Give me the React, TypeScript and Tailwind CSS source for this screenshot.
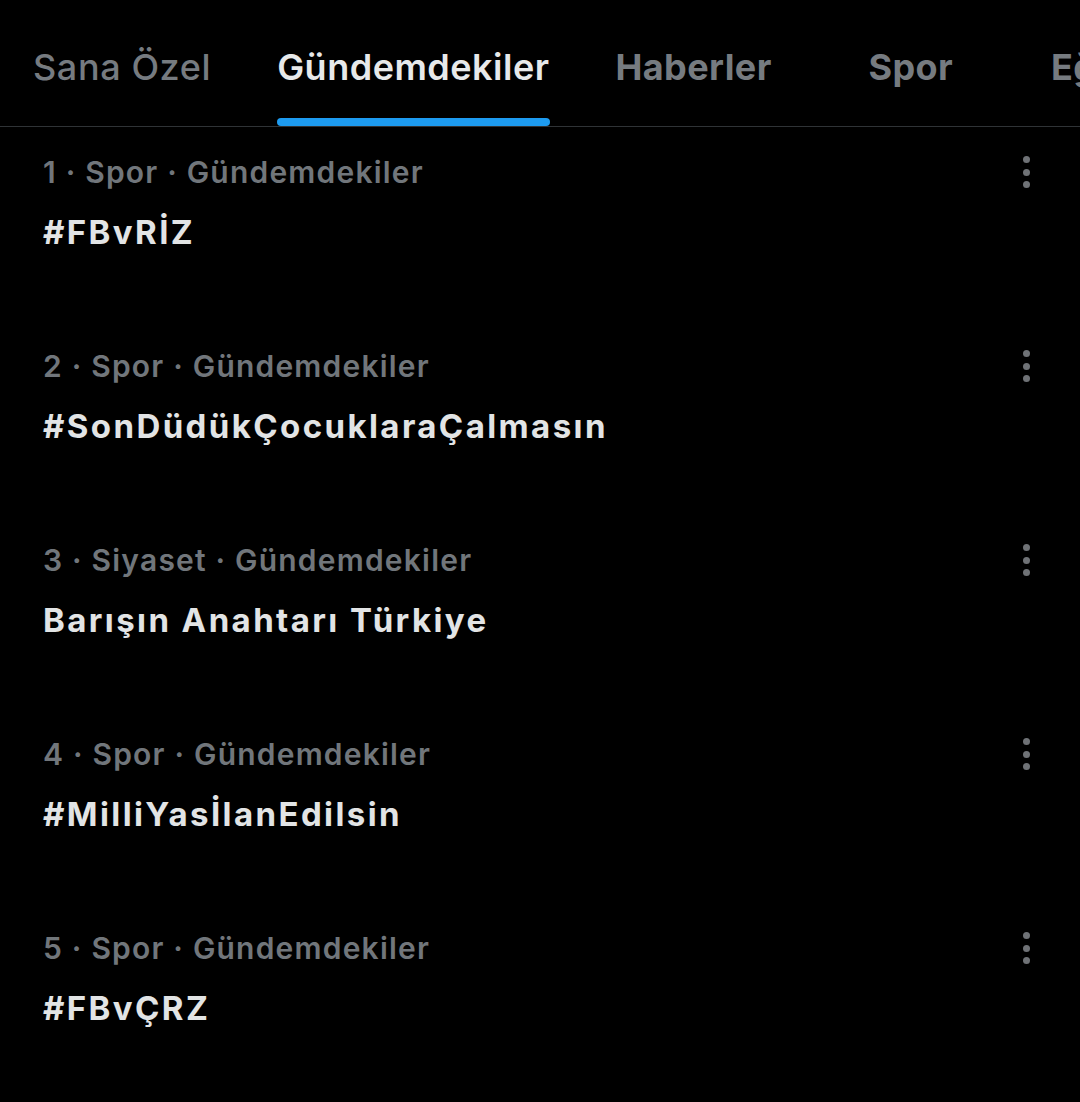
const tabs = [
  { label: 'Sana Özel', active: false, weight: 'font-medium tracking-[0.6px]' },
  { label: 'Gündemdekiler', active: true, weight: 'font-semibold tracking-[0.5px]' },
  { label: 'Haberler', active: false, weight: 'font-bold tracking-[0.4px]' },
  { label: 'Spor', active: false, weight: 'font-bold tracking-[0.4px]' },
  { label: 'Eğlence', active: false, weight: 'font-bold tracking-[0.4px]' },
]

const trends = [
  { rank: 1, category: 'Spor', title: '#FBvRİZ' },
  { rank: 2, category: 'Spor', title: '#SonDüdükÇocuklaraÇalmasın' },
  { rank: 3, category: 'Siyaset', title: 'Barışın Anahtarı Türkiye' },
  { rank: 4, category: 'Spor', title: '#MilliYasİlanEdilsin' },
  { rank: 5, category: 'Spor', title: '#FBvÇRZ' },
]

function MoreDots() {
  return (
    <div className="flex flex-col items-center gap-[5.5px]">
      <span className="size-[7px] rounded-full bg-[#6f7276]" />
      <span className="size-[7px] rounded-full bg-[#6f7276]" />
      <span className="size-[7px] rounded-full bg-[#6f7276]" />
    </div>
  )
}

export default function App() {
  return (
    <div
      className="min-h-[1102px] w-full overflow-hidden bg-black text-[#e7e9ea]"
      style={{ fontFamily: 'Inter, "Noto Sans", sans-serif' }}
    >
      {/* Tabs */}
      <div className="flex h-[127px] overflow-hidden border-b border-[#2f3336]">
        {tabs.map((tab) => (
          <div
            key={tab.label}
            className="flex h-full min-w-[212px] shrink-0 flex-col items-center px-[33px]"
          >
            <span
              className={`pt-[45px] text-[36px] leading-[44px] whitespace-nowrap ${tab.weight} ${
                tab.active ? 'text-[#e7e9ea]' : 'text-[#767b80]'
              }`}
            >
              {tab.label}
            </span>
            {tab.active && <span className="mt-auto h-2 w-full rounded-full bg-[#1d9bf0]" />}
          </div>
        ))}
      </div>

      {/* Trends */}
      <div className="flex flex-col">
        {trends.map((t) => (
          <div key={t.rank} className="flex h-[194px] flex-col pt-[25px] pl-[43px] pr-[50px]">
            <div className="flex items-center justify-between">
              <span className="text-[30px] leading-[40px] font-semibold tracking-[1.2px] text-[#71767b]">
                {t.rank} · {t.category} · Gündemdekiler
              </span>
              <MoreDots />
            </div>
            <span className="mt-[20px] text-[33px] leading-[40px] font-bold tracking-[2.4px] text-[#e2e4e5]">
              {t.title}
            </span>
          </div>
        ))}
      </div>
    </div>
  )
}
